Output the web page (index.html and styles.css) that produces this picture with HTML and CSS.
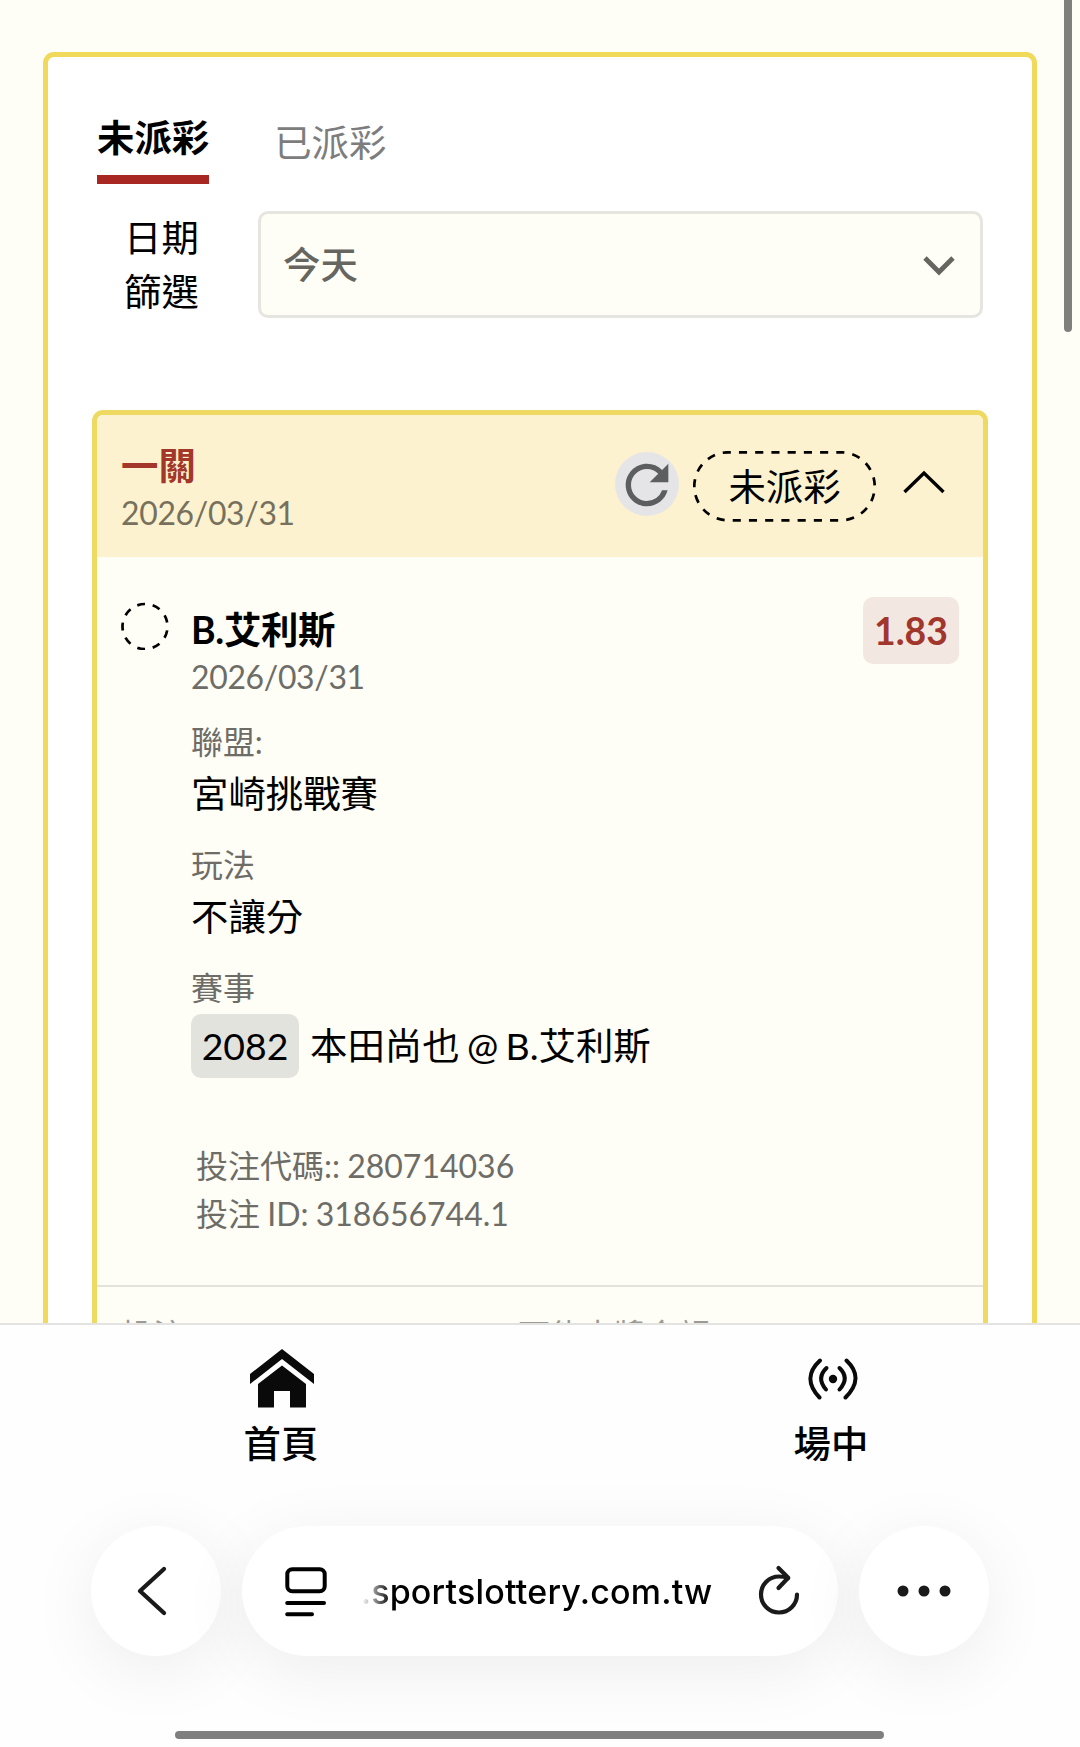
FILE: index.html
```html
<!DOCTYPE html>
<html lang="zh-TW">
<head>
    <meta charset="UTF-8">
    <meta name="viewport" content="width=device-width, initial-scale=1.0">
    <title>投注紀錄</title>
    <link rel="stylesheet" href="styles.css">
</head>
<body>
    <main class="content">
        <div class="panel">
            <!-- 分頁 -->
            <div class="tabs">
                <a class="tab active">未派彩</a>
                <a class="tab">已派彩</a>
            </div>

            <!-- 日期篩選 -->
            <div class="filter">
                <label class="filter-label">日期篩選</label>
                <div class="select">
                    <span>今天</span>
                    <svg class="select-arrow" width="32" height="20" viewBox="0 0 32 20">
                        <path d="M2 2l14 14L30 2" fill="none" stroke="#666560" stroke-width="4.8"/>
                    </svg>
                </div>
            </div>

            <!-- 注單 -->
            <div class="ticket">
                <div class="ticket-head">
                    <div class="ticket-name">
                        <h3>一關</h3>
                        <p class="date">2026/03/31</p>
                    </div>
                    <button class="refresh">
                        <svg width="64" height="64" viewBox="0 0 24 24">
                            <path fill="#5c5e60" d="M17.65 6.35A7.958 7.958 0 0 0 12 4c-4.42 0-7.99 3.58-7.99 8s3.57 8 7.99 8c3.73 0 6.84-2.55 7.73-6h-2.08A5.99 5.99 0 0 1 12 18c-3.31 0-6-2.69-6-6s2.69-6 6-6c1.66 0 3.14.69 4.22 1.78L13 11h7V4l-2.35 2.35z"/>
                        </svg>
                    </button>
                    <div class="status">
                        <svg class="status-line" width="183" height="71" viewBox="0 0 183 71">
                            <rect x="1.3" y="1.3" width="180.4" height="68" rx="34" fill="none" stroke="#000" stroke-width="2.7" pathLength="432" stroke-dasharray="8 8" stroke-dashoffset="-10.5"/>
                        </svg>
                        未派彩
                    </div>
                    <svg class="toggle" width="42" height="24" viewBox="0 0 42 24">
                        <path d="M1.5 22L21 3l19.5 19" fill="none" stroke="#000" stroke-width="3.4"/>
                    </svg>
                </div>

                <div class="ticket-body">
                    <svg class="pending" width="48" height="48" viewBox="0 0 48 48">
                        <circle cx="24" cy="24.5" r="22.5" fill="none" stroke="#000" stroke-width="2.7" pathLength="90" stroke-dasharray="5 5" transform="rotate(-110 24 24.5)"/>
                    </svg>
                    <div class="detail">
                        <h4>B.艾利斯</h4>
                        <p class="date">2026/03/31</p>
                        <dl>
                            <dt>聯盟:</dt>
                            <dd>宮崎挑戰賽</dd>
                            <dt>玩法</dt>
                            <dd>不讓分</dd>
                            <dt>賽事</dt>
                            <dd class="match"><span class="match-no">2082</span>本田尚也 @ B.艾利斯</dd>
                        </dl>
                        <div class="codes">
                            <p>投注代碼:: 280714036</p>
                            <p>投注 ID: 318656744.1</p>
                        </div>
                    </div>
                    <span class="odds">1.83</span>
                </div>

                <div class="ticket-foot">
                    <span>投注</span>
                    <span>可能中獎金額</span>
                </div>
            </div>
        </div>
        <div class="scrollbar"></div>
    </main>

    <!-- 底部選單 -->
    <nav class="nav">
        <a class="nav-item">
            <svg class="icon-home" width="66" height="60" viewBox="0 0 66 60">
                <path fill="#0a0a0a" d="M33 1L65 26v10L33 11 1 36V26z"/>
                <path fill="#0a0a0a" d="M33 17.5L57 36v23.5H41V43H25v16.5H9V36z"/>
            </svg>
            首頁
        </a>
        <a class="nav-item">
            <svg class="icon-live" width="50" height="42" viewBox="0 0 50 42">
                <g fill="none" stroke="#0a0a0a" stroke-width="4" stroke-linecap="round">
                    <path d="M12 2.5Q-7 20 11.5 39.5"/>
                    <path d="M38.5 2.5Q57 20 37.5 39.5"/>
                    <path d="M18.5 10Q8 20 18 31.5"/>
                    <path d="M31.5 10Q42 20 31.5 31.5"/>
                </g>
                <circle cx="25" cy="21" r="4.2" fill="#0a0a0a"/>
            </svg>
            場中
        </a>
    </nav>

    <!-- 瀏覽器工具列 -->
    <footer class="browser">
        <div class="browser-bar">
            <button class="round">
                <svg width="32" height="52" viewBox="0 0 32 52">
                    <path d="M28 4L4 26l24 22" fill="none" stroke="#1a1a1a" stroke-width="4.3" stroke-linecap="round" stroke-linejoin="round"/>
                </svg>
            </button>
            <div class="address">
                <svg class="icon-page" width="42" height="50" viewBox="0 0 42 50" fill="none" stroke="#000" stroke-width="4" stroke-linecap="round">
                    <rect x="2.3" y="2.3" width="37.4" height="22" rx="5"/>
                    <path d="M2.2 36h36.8M2.2 47.2h24.8"/>
                </svg>
                <span class="url">.sportslottery.com.tw</span>
                <svg width="42" height="52" viewBox="0 0 42 52" fill="none" stroke="#1a1a1a" stroke-width="4.2" stroke-linecap="round" stroke-linejoin="round">
                    <path d="M39 29.5A18 18 0 1 1 21 11.500q5 0 9 1.600"/>
                    <path d="M20.5 3l9.700 9.700L20.500 23"/>
                </svg>
            </div>
            <button class="round">
                <svg width="54" height="12" viewBox="0 0 54 12" fill="#1a1a1a">
                    <circle cx="6" cy="6" r="5.5"/>
                    <circle cx="27" cy="6" r="5.5"/>
                    <circle cx="48" cy="6" r="5.5"/>
                </svg>
            </button>
        </div>
        <div class="home-line"></div>
    </footer>
</body>
</html>
```

FILE: styles.css
```css
/* 基礎樣式 */
* {
    box-sizing: border-box;
    margin: 0;
    padding: 0;
}

body {
    font-family: Lato, "Noto Sans CJK TC", sans-serif;
    font-size: 37.4px;
    color: #000;
    background: #fefefe;
    height: 1747px;
    overflow: hidden;
    display: flex;
    flex-direction: column;
}

button {
    border: none;
    font: inherit;
    cursor: pointer;
}

svg {
    display: block;
    flex-shrink: 0;
}

.content {
    position: relative;
    height: 1323px;
    padding: 52px 43px 0;
    overflow: hidden;
    background: #fefef6;
}

.panel {
    height: 1500px;
    padding: 54px 49px 0;
    border: 5px solid #f1d95b;
    border-radius: 11px;
    background: #fff;
}

/* 分頁 */
.tabs {
    display: flex;
    align-items: flex-start;
    gap: 65px;
    line-height: 54px;
}

.tab {
    margin-top: 5px;
    color: #7d7d7d;
}

.tab.active {
    margin-top: 0;
    padding-bottom: 10px;
    border-bottom: 9px solid #a92722;
    color: #000;
    font-weight: 700;
}

/* 日期篩選 */
.filter {
    display: flex;
    gap: 58px;
    margin: 27px 0 92px 27px;
}

.filter-label {
    width: 76px;
    line-height: 53.5px;
}

.select {
    flex: 1;
    display: flex;
    align-items: center;
    justify-content: space-between;
    height: 107px;
    padding: 0 26px 4px 22px;
    border: 3px solid #e6e5df;
    border-radius: 10px;
    background: #fefef6;
    color: #666560;
    font-weight: 500;
}

.select-arrow {
    margin: 6px -1px 0 0;
}

/* 注單 */
.ticket {
    margin: 0 -5px;
    height: 1200px;
    border: 5px solid #eeda62;
    border-radius: 11px;
    background: #fefdf6;
}

.ticket-head {
    display: flex;
    height: 142px;
    padding: 27px 38px 0 24px;
    background: #fcf2cf;
    border-radius: 6px 6px 0 0;
}

.ticket-name {
    flex: 1;
}

.ticket-head h3,
.detail h4 {
    font-size: 37.4px;
    line-height: 47px;
}

.detail h4 {
    margin-top: -1px;
    letter-spacing: -0.3px;
}

.ticket-head h3 {
    color: #a3372a;
}

.date {
    padding-top: 1px;
    color: #6d6c66;
    font-size: 31.9px;
    letter-spacing: -0.3px;
    line-height: 47px;
}

.ticket-head .date {
    color: #77705c;
}

.refresh {
    width: 64px;
    height: 64px;
    margin: 10px 14px 0 0;
    border-radius: 50%;
    background: #e5e5e8;
}

.refresh svg {
    margin-top: 1px;
}

.status {
    position: relative;
    width: 183px;
    height: 71px;
    margin-top: 9px;
    line-height: 71px;
    text-align: center;
}

.status-line {
    position: absolute;
    left: 0;
    top: 0;
}

.toggle {
    margin: 28px 0 0 27px;
}

.ticket-body {
    display: flex;
    align-items: flex-start;
    height: 730px;
    padding: 45px 24px 0 24px;
    border-bottom: 2px solid #e3e2db;
}

.detail {
    flex: 1;
    padding: 5px 0 0 22px;
}

.detail dt {
    margin-top: 20px;
    color: #6d6c66;
    font-size: 31.9px;
    line-height: 47px;
}

.detail dt:first-child {
    margin-top: 18px;
}

.detail dd {
    line-height: 56px;
}

.detail .match {
    display: flex;
    align-items: center;
    gap: 11px;
    margin-top: 2px;
    word-spacing: -2.2px;
}

.match-no {
    width: 108px;
    border-radius: 10px;
    background: #e3e3dd;
    line-height: 64px;
    text-align: center;
}

.codes {
    margin: 64px 0 0 5px;
    color: #6d6c66;
    font-size: 32px;
    line-height: 48px;
    word-spacing: -1px;
}

.odds {
    width: 96px;
    margin-top: -5px;
    border-radius: 10px;
    background: #f3e7e1;
    color: #a1362c;
    font-weight: 700;
    line-height: 67px;
    text-align: center;
}

.ticket-foot {
    display: grid;
    grid-template-columns: 397px 1fr;
    padding: 25px 24px;
    color: #9b9a95;
    font-size: 31.9px;
    line-height: 47px;
}

.scrollbar {
    position: absolute;
    top: -10px;
    right: 8px;
    width: 8px;
    height: 342px;
    border-radius: 4px;
    background: #7f7f7e;
}

/* 底部選單 */
.nav {
    display: grid;
    grid-template-columns: 550px 550px;
    height: 171px;
    padding-left: 6px;
    border-top: 2px solid #e3e3e2;
    font-weight: 500;
}

.nav-item {
    display: flex;
    flex-direction: column;
    align-items: center;
    justify-content: space-between;
    padding: 23px 0 25px;
    line-height: 50px;
}

.icon-home {
    margin-left: 2px;
}

.icon-live {
    margin: 10px 0 0 3px;
}

/* 瀏覽器工具列 */
.browser {
    flex: 1;
    padding-top: 32px;
}

.browser-bar {
    display: flex;
    gap: 21px;
    padding: 0 91px;
}

.round,
.address {
    display: flex;
    align-items: center;
    justify-content: center;
    height: 130px;
    border-radius: 65px;
    background: #fff;
    box-shadow: 0 14px 70px rgba(0, 0, 0, 0.07);
}

.round {
    width: 130px;
    padding-right: 8px;
}

.round:last-child {
    padding-right: 0;
}

.address {
    flex: 1;
    padding: 0 38px 0 43px;
    justify-content: space-between;
}

.icon-page {
    margin-top: 2px;
}

.url {
    margin-right: 12px;
    font-family: Inter, sans-serif;
    font-size: 34px;
    font-weight: 500;
    letter-spacing: 0.2px;
    mask-image: linear-gradient(to right, transparent 0, rgba(0, 0, 0, 0.3) 10px, #000 30px);
}

.home-line {
    width: 709px;
    height: 8px;
    margin: 75px 0 0 175px;
    border-radius: 4px;
    background: #7f7f7f;
}
```
